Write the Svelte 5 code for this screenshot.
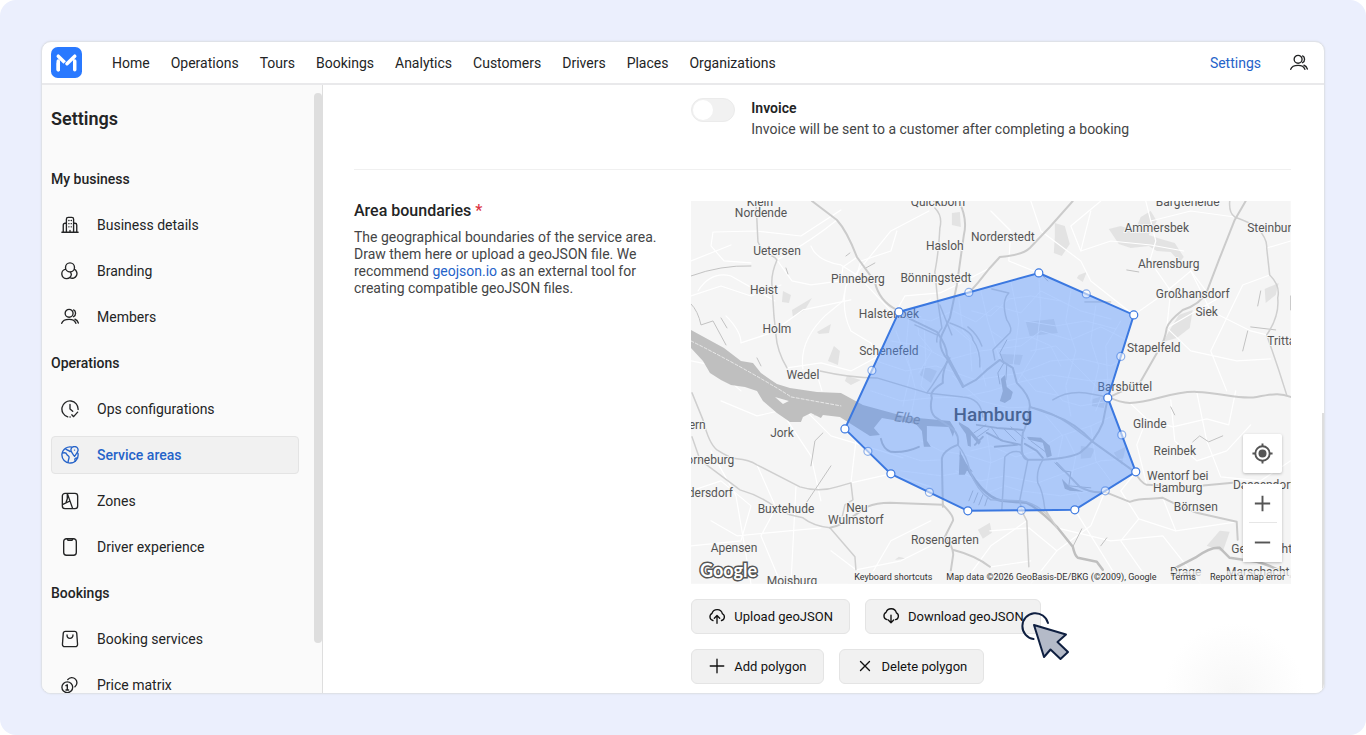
<script>
  const navItems = [
    'Home', 'Operations', 'Tours', 'Bookings', 'Analytics',
    'Customers', 'Drivers', 'Places', 'Organizations'
  ]

  const sections = [
    {
      title: 'My business',
      items: [
        { label: 'Business details', icon: 'building' },
        { label: 'Branding', icon: 'circles' },
        { label: 'Members', icon: 'users' }
      ]
    },
    {
      title: 'Operations',
      items: [
        { label: 'Ops configurations', icon: 'clock' },
        { label: 'Service areas', icon: 'globe' },
        { label: 'Zones', icon: 'zones' },
        { label: 'Driver experience', icon: 'phone' }
      ]
    },
    {
      title: 'Bookings',
      items: [
        { label: 'Booking services', icon: 'bag' },
        { label: 'Price matrix', icon: 'coins' }
      ]
    }
  ]

  const icons = {
    building: 'M1 18h18M6 18V3.500a2 2 0 0 1 2-2h4a2 2 0 0 1 2 2V18M2.500 18v-8a2 2 0 0 1 2-2H6M14 8h1.500a2 2 0 0 1 2 2v8M8.700 5h.2M11.300 5h.2M8.700 8.500h.2M11.300 8.500h.2M8.700 12h.2M11.300 12h.2M10 18v-2',
    circles: 'M10 1a5 5 0 1 0 0 10a5 5 0 1 0 0-10M5.300 8A5.300 5.300 0 1 0 11.500 13.500A5 5 0 0 0 10 11M14.700 8A5.300 5.300 0 1 1 10 17.500',
    users: 'M9 1.500a4.400 4.400 0 1 0 0 8.800A4.400 4.400 0 1 0 9 1.500M.8 17c1-3 4.200-4.300 8.200-4.300s6.500 1.300 7.500 4.300M14 2.200c2.900 1.300 2.900 6.200 0 7.500M15.500 12.500c2 .7 3.200 2.200 3.800 4.200',
    clock: 'M7.500 18.700A9 9 0 1 1 19 10.500M10 5v5l3 2.500M12 16.500l2 2 4.500-5M10 18.900h.2',
    globe: 'M12.500 1.300A9 9 0 1 0 18.800 8M1.300 8c2.500-.8 4.700 0 5.200 1.500s2.500 1 2.500 3-1.500 4-1 6.300M5 2.700c1 2.500 3.800 1.500 5 3.500M15 11.500c-2-2.700-4-5-4-7a4 4 0 0 1 8 0c0 2-2 4.300-4 7zM15 4.500h.1M18.500 13.500c-2-.6-3.500.2-3 2l.5 1.500',
    zones: 'M4.500 1.500h11a3 3 0 0 1 3 3v11a3 3 0 0 1-3 3h-11a3 3 0 0 1-3-3v-11a3 3 0 0 1 3-3zM7 1.500l6 17M1.500 14l8.500-4M7 1.500v6L5.500 12',
    phone: 'M6 .8h8a3 3 0 0 1 3 3v12.400a3 3 0 0 1-3 3H6a3 3 0 0 1-3-3V3.800a3 3 0 0 1 3-3zM7 .8v.7a1.200 1.200 0 0 0 1.200 1.200h3.600A1.200 1.200 0 0 0 13 1.500V.8',
    bag: 'M5 1.500h10a2.500 2.500 0 0 1 2.500 2.300l.9 12a2.500 2.500 0 0 1-2.500 2.700H4.100a2.500 2.500 0 0 1-2.500-2.700l.9-12A2.500 2.500 0 0 1 5 1.500zM6.700 5.500c0 5 6.600 5 6.600 0',
    coins: 'M7 6.500a6 6 0 1 0 0 12a6 6 0 1 0 0-12M7.500 4A5.700 5.700 0 1 1 15.500 12M5.500 10.700L7 9.800v5.700M5.500 15.500h3',
    upload: 'M5.500 15A4.300 4.300 0 0 1 4.500 7A6 6 0 0 1 16 7.500A4 4 0 0 1 15 15M10 18V10M7 12.500l3-3 3 3',
    download: 'M5.500 14A4.300 4.300 0 0 1 4.500 6A6 6 0 0 1 16 6.500A4 4 0 0 1 15 14M10 9v8.500M7 14.500l3 3 3-3',
    plus: 'M10 2.500v15M2.500 10h15',
    cross: 'M5 5l10 10M15 5L5 15'
  }

  const vertices = [
    [348, 72], [443, 114], [417, 197], [445, 271], [384, 309],
    [277, 310], [200, 273], [154, 228], [208, 111]
  ]
  const midpoints = vertices.map(([x, y], i) => {
    const [nx, ny] = vertices[(i + 1) % vertices.length]
    return [(x + nx) / 2, (y + ny) / 2]
  })

  const motorways = [
    'M121 0L146 19Q156 30 166 56L184 81Q188 100 206 109L219 118L246 131Q256 145 256 154L272 184',
    'M555 0L544 19L529 57L516 91Q510 103 492 109Q478 120 476 127Q474 140 469 147L449 182L417 197',
    'M382 0L359 26L339 47Q332 54 309 56L299 67L287 82L279 91',
    'M268 0Q277 18 273 34L266 84L259 117L251 134Q246 146 257 159Q251 172 252 182Q238 190 241 197Q238 210 244 216L259 226Q269 232 267 244Q251 250 251 259L252 306',
    'M252 304Q264 316 262 320L254 336Q264 348 262 356L259 376M262 349Q285 355 299 366',
    'M139 327Q153 324 163 315L176 306Q186 302 199 302L252 304',
    'M417 196Q430 202 439 202C462 202 480 190 506 191S549 199 566 196S590 192 600 196',
    'M257 159L272 186M339 206L362 214Q385 222 402 241L444 271Q450 282 456 284L499 286L542 282',
    'M366 262L389 286Q402 293 414 291L439 301C452 296 460 299 472 297Q490 306 506 312L546 321L547 339',
    'M272 186L285 179L296 169L309 159L322 167L326 182Q340 196 339 206Q336 225 332 232L331 242Q330 258 337 259L352 259Q380 257 389 252Q405 240 412 222L417 197'
  ]

  const roads = [
    'M65 0L67 41L72 51Q82 54 86 59Q80 73 81 84L83 115L85 134Q86 150 96 167',
    'M244 7Q252 15 249 27Q248 50 244 71L247 101L251 127Q245 135 246 141',
    'M129 170Q160 177 186 177L236 192L241 185L259 157M236 192L272 196Q290 197 292 216',
    'M539 0Q538 12 544 16Q560 22 566 26Q577 38 576 47L579 74Q590 85 587 97Q589 115 576 134Q587 165 596 194',
    'M1 192L12 219Q18 243 26 249Q40 258 46 258Q58 259 66 264L109 286Q128 292 146 286L160 282L162 299L154 304L151 317',
    'M1 236L9 259L49 289Q70 295 85 307L99 314L112 317Q122 325 139 327L164 356L165 369',
    'M259 122Q282 130 282 139Q290 150 289 166M316 119Q322 128 319 132L302 149L304 159M316 119Q310 100 318 92L301 88',
    'M362 199Q376 190 395 192L417 196M339 206Q360 210 378 223L402 241',
    'M311 309L314 256Q320 249 329 251L337 259L329 299Q330 310 336 320L338 366',
    'M352 259Q345 270 347 282Q352 290 354 308L366 327M267 244Q276 255 279 270Q286 290 300 299L329 300Q347 302 361 319',
    'M277 126Q287 134 291 145M224 124L246 134M249 104L261 134'
  ]

  const streets = [
    'M0 60Q25 50 40 44M22 31L20 45L33 60L60 62M23 31L65 30L110 35L150 9M86 59Q120 40 146 19',
    'M86 59L101 80L120 84L150 80L152 66L165 57M120 45Q126 60 150 64L166 74L200 110',
    'M0 95L30 85L60 95L90 84M7 90Q20 70 40 75L84 100M35 115Q50 130 50 142L80 132L112 109L160 99',
    'M112 168Q108 140 135 114L152 100L155 85L200 30L238 10M155 85Q150 110 160 130L180 142L188 160',
    'M166 74L170 60L200 50L206 30M206 109L214 95L249 92L266 84L299 67M200 110L230 116',
    'M96 167L130 162L160 170L188 155L200 130L208 111M0 160L20 164L50 190M125 170L131 190',
    'M30 200L66 215L110 205L140 235L190 250L212 257M90 210L120 255L130 300M20 250L45 295L60 383',
    'M0 290L30 280L60 305L50 340L0 345M66 264L85 307L70 335L90 383M105 286L100 383M20 320L46 335L130 327',
    'M165 240L160 282M160 282L200 273L240 286M140 350L165 369L210 360L250 340M175 383L200 340L240 320',
    'M300 10L320 30L318 60L348 72M340 0L350 30L390 60L400 80L443 114M400 10L390 50L420 40L460 44L493 50',
    'M390 50L380 25L410 0M443 114L470 95L500 70L516 91M455 0L465 40L459 60L480 90L476 127L540 90',
    'M476 127L500 150L546 160L580 158M460 20L500 10L544 16M579 74L552 84L520 150L536 190M600 40L576 47',
    'M500 70L520 110L560 130L576 134M439 202L456 218L482 226L516 218L538 224L545 190M456 218L446 244L456 284',
    'M480 199L484 240L506 260L536 250L560 224M506 191L516 240L530 276L570 280L600 260M445 271L430 290L448 318L485 330L546 321',
    'M414 291L400 325L366 350L340 383M366 327L420 340L472 335L510 383M384 309L430 383M336 320L300 345L272 383',
    'M299 330L338 327L366 350M300 366L340 360M448 318L430 340L460 383M472 297L485 330'
  ]

  const cityStreets = [
    'M215 115L240 120L262 110L285 121L305 105L330 112L350 90L390 110L420 118',
    'M200 140L230 145L257 159L290 150L330 145L350 130L380 139L410 126L438 140',
    'M185 160L215 170L245 165L285 179L330 172L360 160L390 158L420 165L430 160',
    'M180 190L210 200L240 197L272 196L300 190L326 182L360 174L400 180L425 178',
    'M268 98L272 130L285 145L295 185M290 90L297 120L309 159M320 80L328 120L322 167M348 74L350 110L345 150L326 182',
    'M380 90L375 120L385 150L375 185L380 215M405 105L400 140L408 165L400 200M430 120L415 145L417 180L405 210',
    'M218 115L215 150L225 190L220 215M233 120L235 160L230 185L241 197M205 130L220 170L212 205',
    'M280 250L300 245L325 256L345 250L370 235L400 225L422 215M265 270L290 280L314 275L347 282L380 270L410 260L435 258',
    'M230 240L250 250L275 254L300 262L314 256M200 250L230 260L251 259M210 270L251 275L279 270M290 295L314 285L330 290L370 295L400 290',
    'M375 235L385 255L380 280L390 300M355 215L372 235L366 262M400 225L405 260L420 280M295 225L300 260L295 290',
    'M261 125L279 140L281 170M300 130L315 140L340 136L360 145L370 165M330 172L345 190L370 195M262 175L290 200L318 207L339 206',
    'M334 120L365 125L395 120L425 128M340 150L365 145L385 165L415 195M352 175L372 200L390 205L420 200',
    'M240 98L225 110L228 134L241 150L228 172M281 110L300 115L318 98L340 95L370 100'
  ]

  const forests = [
    'M418 28l12-3 14 5 6-14 10-6 6 10-8 14 12 4 14 4 9 14-4 5-9-10-14-1-8-5-18 2-12-4z',
    'M364 22l10 3 5 18-8 12-8-3 1-16z', 'M488 114l14-5-3 18-13 10-14 4z',
    'M101 109l20-12-7 12-12 7z', 'M126 131l14-8-2 9-10 1z', 'M143 145l6 5-2 14-10-4z',
    'M261 12l8-1 1 15-9-2z', 'M92 90l8 4-2 8-7-1z', 'M529 330l10 1-7 20-16-6z',
    'M574 88l14-6-3 12-10 8z', 'M388 74l8-3-4 10-6-4z', 'M335 121l28-3 4 14-28 3z',
    'M310 153l22 1-3 10-18-2z', 'M402 198l14-4-3 13-12-2z', 'M390 245l14 3-4 9-10 1z',
    'M233 165l13 5-6 12-11-8z', 'M287 329l12-7 2 10-9 6z', 'M423 252l12-6-4 18z',
    'M208 356l8 2-12 1zM156 175l14 4-10 5-6-4z'
  ]

  const creeks = [
    'M0 75Q30 64 60 65M0 103Q7 110 10 124L22 120L35 144M30 117L36 127M95 67l2 6M175 67l9-5',
    'M124 214q5-1 6-4M155 55l4-3M66 157l4 8M120 265l4-25 8-8M110 310l30-45M436 69l12 2M560 126l25 3',
    'M570 90l-3 15M557 130l-5 20M600 95v14M394 101h26M352 75l5 5M502 241l7-6 9 6 14-6M480 206l4 8',
    'M316 139l-7 13 4 10-6 10 2 11M316 163l-1 16M364 262l8 8 8 1-2 14 22 2M410 345l6-8M382 346l9-18'
  ]

  const labels = [
    ['Klein', 69, 5], ['Nordende', 70, 16], ['Uetersen', 86, 54], ['Heist', 73, 93],
    ['Holm', 86, 132], ['Wedel', 112, 178], ['Pinneberg', 167, 82], ['Quickborn', 247, 5],
    ['Hasloh', 254, 49], ['Norderstedt', 312, 40], ['Bönningstedt', 245, 81], ['Halstenbek', 198, 117],
    ['Schenefeld', 198, 154], ['Bargteheide', 497, 5], ['Ammersbek', 466, 31], ['Steinburg', 582, 31],
    ['Ahrensburg', 478, 67], ['Großhansdorf', 502, 97], ['Siek', 516, 115], ['Stapelfeld', 463, 151],
    ['Trittau', 594, 144], ['Barsbüttel', 434, 190], ['Glinde', 459, 227], ['Reinbek', 484, 254],
    ['Wentorf bei', 487, 279], ['Hamburg', 487, 291], ['Börnsen', 505, 310], ['Dassendorf', 573, 288],
    ['Geesthacht', 571, 352], ['Drage', 495, 375], ['Marschacht', 567, 375], ['Jork', 91, 236],
    ['Horneburg', 15, 263], ['Fredersdorf', 11, 296], ['Stadern', -6, 228], ['Buxtehude', 95, 312],
    ['Neu', 166, 311], ['Wulmstorf', 165, 323], ['Rosengarten', 254, 343], ['Apensen', 43, 351],
    ['Moisburg', 101, 384]
  ]

  let active = $state('Service areas')
  let invoice = $state(false)
</script>

{#snippet icon(name)}
  <svg class="icon" viewBox="0 0 20 20" aria-hidden="true"><path d={icons[name]} /></svg>
{/snippet}

<div class="stage">
  <div class="window">
    <header>
      <a class="logo" href="#home" aria-label="Home">
        <svg viewBox="0 0 32 32">
          <rect width="32" height="32" rx="7" fill="#2979ff" />
          <path d="M7.500 23.500V17M7.500 9.500l8.500 8.300" />
          <path d="M14.500 19L24.500 9.500" stroke="#2979ff" stroke-width="5" />
          <path d="M16.500 17.300L24.500 9.500M7.500 23.500v-9M24.500 23.500v-9" />
        </svg>
      </a>
      <nav>
        {#each navItems as item}
          <a href="#{item.toLowerCase()}">{item}</a>
        {/each}
      </nav>
      <a class="current" href="#settings">Settings</a>
      <button class="account" aria-label="Account">{@render icon('users')}</button>
    </header>

    <div class="body">
      <aside>
        <h1>Settings</h1>
        {#each sections as section}
          <h2>{section.title}</h2>
          {#each section.items as item}
            <a
              class="side-item"
              class:active={active === item.label}
              href="#{item.icon}"
              onclick={() => (active = item.label)}
            >
              {@render icon(item.icon)}
              {item.label}
            </a>
          {/each}
        {/each}
        <div class="scrollbar"></div>
      </aside>

      <main>
        <section class="row invoice">
          <div></div>
          <label class="switch-row">
            <input type="checkbox" role="switch" bind:checked={invoice} />
            <span>
              <strong>Invoice</strong>
              <span class="hint">Invoice will be sent to a customer after completing a booking</span>
            </span>
          </label>
        </section>

        <section class="row">
          <div class="about">
            <h3>Area boundaries <span class="required">*</span></h3>
            <p>
              The geographical boundaries of the service area. Draw them here or upload a geoJSON
              file. We recommend <a href="#geojson">geojson.io</a> as an external tool for creating
              compatible geoJSON files.
            </p>
          </div>

          <div>
            <div class="map">
              <svg class="canvas" viewBox="0 0 600 383" role="img" aria-label="Service area map">
                <rect width="600" height="383" fill="#f5f5f5" />
                <g class="forests">
                  {#each forests as d}<path {d} />{/each}
                </g>
                <g class="streets">
                  {#each streets as d}<path {d} />{/each}
                </g>
                <g class="streets city">
                  {#each cityStreets as d}<path {d} />{/each}
                </g>
                <g class="water">
                  <path d="M0 129L33 147L50 160L62 162L70 172L80 179L86 183L99 187L126 191L150 192L172 204L216 216L259 220L264 228L262 236L258 226L236 225V240L240 246H233L231 230L225 223L191 217L183 227L189 234L179 235L149 216L132 214L130 217L120 212L112 216L110 221L99 221L86 212L72 200L66 190L54 186L40 184L30 179L19 172L12 160L0 147z" />
                  <path d="M314 174L316 186L322 191L320 198L314 202L309 200L312 190L310 178z" />
                  <path d="M268 221l10 6 12 14-2 3-8-10v12l-3-1-2-12-7-10zM268 245l4 14 10 12-6-1-2 4h-6l1-26zM336 236l14 1 9 8 2 10-5 2-4-15-14-3z" />
                  <path d="M374 288l-3-10 8 8 14 5-14-1z" />
                </g>
                <path d="M84 196l14 4-6 3z" fill="#f5f5f5" />
                <path class="ferry" d="M0 140Q30 155 60 172T100 196L150 205" />
                <g class="river">
                  <path d="M270 255Q290 296 311 300L336 302Q348 308 366 326L382 346Q384 355 387 357L406 361L412 369M481 369L506 356Q520 346 529 347Q536 354 539 357L566 361Q585 366 600 376" />
                </g>
                <g class="creeks">
                  {#each creeks as d}<path {d} />{/each}
                  <path d="M282 290l-4 10M287 292l-4 10M292 294l-4 10M297 296l-3 9M283 232l12-8M284 238l14-10M300 226l10 14M313 228l12 12M320 226l14 12M340 240l16 12" />
                  <path class="dock" d="M190 238q2 10 10 13 15 1 28-5M286 224l20 3 26 2M296 232l16 8 18 4M304 246l22-2M284 244l8-8M334 243l12 7 6 7" />
                </g>
                <g class="roads">
                  {#each roads as d}<path {d} />{/each}
                </g>
                <g class="motorways">
                  {#each motorways as d}<path {d} />{/each}
                </g>
                <g class="labels">
                  {#each labels as [name, x, y]}<text {x} {y}>{name}</text>{/each}
                  <text class="water-name" x="216" y="222" transform="rotate(8 216 222)">Elbe</text>
                  <text class="city-name" x="302" y="220">Hamburg</text>
                </g>
                <polygon class="area" points={vertices.join(' ')} />
                {#each midpoints as [cx, cy]}
                  <circle class="handle faint" {cx} {cy} r="4" />
                {/each}
                {#each vertices as [cx, cy]}
                  <circle class="handle" {cx} {cy} r="4" />
                {/each}
                <text class="google" x="9" y="376">Google</text>
              </svg>
              <div class="credits">
                <button>Keyboard shortcuts</button>
                <span>Map data ©2026 GeoBasis-DE/BKG (©2009), Google</span>
                <a href="#terms">Terms</a>
                <a href="#report">Report a map error</a>
              </div>
              <div class="controls">
                <button class="locate" aria-label="My location">
                  <svg viewBox="0 0 24 24">
                    <circle cx="12" cy="12" r="7.500" />
                    <circle cx="12" cy="12" r="3.200" class="dot" />
                    <path d="M12 1.500v3M12 19.500v3M1.500 12h3M19.500 12h3" />
                  </svg>
                </button>
                <div class="zoom">
                  <button aria-label="Zoom in"><svg viewBox="0 0 24 24"><path d="M12 4v16M4 12h16" /></svg></button>
                  <button aria-label="Zoom out"><svg viewBox="0 0 24 24"><path d="M4 12h16" /></svg></button>
                </div>
              </div>
            </div>

            <div class="actions">
              <button>{@render icon('upload')}Upload geoJSON</button>
              <button>
                {@render icon('download')}Download geoJSON
                <svg class="cursor" viewBox="0 0 50 50" aria-hidden="true">
                  <path class="ring" d="M13.500 28A13 13 0 1 1 28 12" />
                  <path d="M14 14L46 23.500L37.500 31L48 41L40.500 48L30.500 38.500L24 46z" />
                </svg>
              </button>
            </div>
            <div class="actions">
              <button>{@render icon('plus')}Add polygon</button>
              <button>{@render icon('cross')}Delete polygon</button>
            </div>
          </div>
        </section>
        <div class="page-scrollbar"></div>
      </main>
    </div>
  </div>
</div>

<style>
  :global(body) {
    background: #fff;
  }

  .stage {
    box-sizing: border-box;
    height: 100vh;
    padding: 41px;
    background: #ebeffd;
    border-radius: 16px;
    font-family: Roboto, "Noto Sans", sans-serif;
    font-size: 14px;
    color: #232425;
  }

  .window {
    box-sizing: border-box;
    display: flex;
    flex-direction: column;
    height: 100%;
    background: #fff;
    border: 1px solid #dfe2e8;
    border-radius: 10px;
    box-shadow: 0 0 2px #d8dce6;
    overflow: hidden;
  }

  a {
    color: inherit;
    text-decoration: none;
  }

  button {
    font: inherit;
    color: inherit;
    border: none;
    cursor: pointer;
  }

  .icon {
    width: 18px;
    height: 18px;
    flex: none;
    fill: none;
    stroke: currentColor;
    stroke-width: 1.5;
    stroke-linecap: round;
    stroke-linejoin: round;
  }

  header {
    display: flex;
    align-items: center;
    flex: none;
    height: 41px;
    padding: 0 16px 0 9px;
    border-bottom: 2px solid #e9e9eb;
  }

  .logo {
    width: 31px;
    height: 31px;
    margin-right: 30px;
  }

  .logo svg {
    display: block;
    fill: none;
    stroke: #fff;
    stroke-width: 3.6;
    stroke-linecap: round;
    stroke-linejoin: round;
  }

  .logo rect {
    stroke: none;
  }

  nav {
    display: flex;
    gap: 21px;
    flex: 1;
  }

  .current {
    color: #2563c9;
    margin-right: 29px;
  }

  .account {
    display: flex;
    padding: 0;
    background: none;
  }

  .body {
    display: flex;
    flex: 1;
    min-height: 0;
  }

  aside {
    position: relative;
    box-sizing: border-box;
    flex: 0 0 281px;
    padding: 14px 23px 0 9px;
    background: #fafafa;
    border-right: 1px solid #dedede;
    overflow: hidden;
  }

  h1 {
    margin: 0 0 21px;
    font-size: 18px;
    font-weight: 600;
    line-height: 40px;
  }

  h2 {
    margin: 0 0 8px;
    font-size: 14px;
    font-weight: 500;
    line-height: 38px;
  }

  .side-item {
    box-sizing: border-box;
    display: flex;
    align-items: center;
    gap: 18px;
    height: 38px;
    margin-bottom: 8px;
    padding: 0 9px;
    border: 1px solid transparent;
    border-radius: 4px;
  }

  .side-item.active {
    background: #f1f1f1;
    border-color: #e4e4e4;
    color: #2563c9;
    font-weight: 500;
  }

  .scrollbar {
    position: absolute;
    top: 8px;
    right: 0;
    bottom: 50px;
    width: 8px;
    background: #dedede;
    border-radius: 4px;
  }

  main {
    position: relative;
    flex: 1;
    min-width: 0;
    padding: 13px 33px 0 31px;
    background: radial-gradient(circle at 91% 100%, #f7f7f7, #fff 70px);
    overflow: hidden;
  }

  .page-scrollbar {
    position: absolute;
    right: 0;
    bottom: 0;
    width: 2px;
    height: 46%;
    background: #dedede;
  }

  .row {
    display: grid;
    grid-template-columns: minmax(0, 9fr) minmax(0, 16fr);
  }

  .invoice {
    margin-bottom: 31px;
    padding-bottom: 29px;
    border-bottom: 1px solid #f0f0f0;
  }

  .switch-row {
    display: flex;
    gap: 16px;
    cursor: pointer;
  }

  .switch-row input {
    appearance: none;
    box-sizing: border-box;
    width: 44px;
    height: 24px;
    margin: 0;
    padding: 1px;
    background: #f1f1f1;
    border: 1px solid #ebebeb;
    border-radius: 12px;
  }

  .switch-row input::before {
    content: '';
    display: block;
    width: 20px;
    height: 20px;
    background: #fff;
    border-radius: 50%;
  }

  .switch-row input:checked {
    background: #2979ff;
  }

  .switch-row input:checked::before {
    margin-left: 20px;
  }

  .switch-row strong,
  .hint {
    display: block;
    line-height: 21px;
  }

  .switch-row strong {
    font-weight: 600;
  }

  .hint,
  .about p {
    color: #444546;
  }

  .about {
    padding-right: 30px;
  }

  h3 {
    margin: 0 0 8px;
    font-size: 16px;
    font-weight: 500;
    line-height: 20px;
  }

  .required {
    color: #dc3545;
  }

  .about p {
    margin: 0;
    line-height: 17px;
  }

  .about a {
    color: #2563c9;
  }

  .map {
    position: relative;
    margin-bottom: 15px;
    overflow: hidden;
  }

  .canvas {
    display: block;
    width: 100%;
  }

  .canvas path {
    stroke-linecap: round;
    stroke-linejoin: round;
  }

  .forests path {
    fill: #e3e3e3;
  }

  .streets path {
    fill: none;
    stroke: #fff;
    stroke-width: 1.2;
  }

  .streets.city path {
    stroke-width: 0.8;
  }

  .water path {
    fill: #bfbfbf;
  }

  .ferry {
    fill: none;
    stroke: #e8e8e8;
    stroke-dasharray: 3 2;
  }

  .river path {
    fill: none;
    stroke: #bfbfbf;
    stroke-width: 2.5;
  }

  .creeks path {
    fill: none;
    stroke: #c2c2c2;
    stroke-width: 1;
  }

  .creeks .dock {
    stroke-width: 2;
  }

  .roads path {
    fill: none;
    stroke: #cfcfcf;
    stroke-width: 1.5;
  }

  .motorways path {
    fill: none;
    stroke: #cbcbcb;
    stroke-width: 2;
  }

  .labels text {
    font-size: 12px;
    text-anchor: middle;
    fill: #555;
    stroke: #f5f5f5;
    stroke-width: 2px;
    paint-order: stroke;
  }

  .labels .water-name {
    font-size: 14px;
    font-style: italic;
    fill: #8b8b8b;
    stroke: none;
  }

  .labels .city-name {
    font-size: 19px;
    font-weight: 500;
    fill: #484848;
    stroke: none;
  }

  .area {
    fill: #4b8cff;
    fill-opacity: 0.42;
    stroke: #3b78e0;
    stroke-width: 2;
  }

  .handle {
    fill: #fff;
    stroke: #3b78e0;
    stroke-width: 1.2;
  }

  .handle.faint {
    opacity: 0.55;
  }

  .google {
    font-family: Lato, sans-serif;
    font-size: 18px;
    font-weight: 700;
    fill: #fff;
    stroke: #555;
    stroke-width: 3px;
    paint-order: stroke;
  }

  .credits {
    position: absolute;
    right: 0;
    bottom: 0;
    display: flex;
    gap: 14px;
    padding: 0 6px;
    background: rgba(245, 245, 245, 0.7);
    font-size: 9px;
    line-height: 13px;
    color: #333;
  }

  .credits button {
    padding: 0;
    background: none;
  }

  .controls {
    position: absolute;
    right: 9px;
    bottom: 22px;
    display: flex;
    flex-direction: column;
    gap: 11px;
    width: 39px;
  }

  .controls button {
    display: flex;
    align-items: center;
    justify-content: center;
    width: 39px;
    height: 39px;
    padding: 0;
    background: #fff;
  }

  .controls svg {
    width: 23px;
    height: 23px;
    fill: none;
    stroke: #555;
    stroke-width: 2;
  }

  .controls .dot {
    fill: #555;
  }

  .locate,
  .zoom {
    border-radius: 2px;
    box-shadow: 0 1px 3px rgba(0, 0, 0, 0.25);
  }

  .zoom button + button::before {
    content: '';
    position: absolute;
    width: 28px;
    height: 1px;
    margin-bottom: 39px;
    background: #e6e6e6;
  }

  .actions {
    display: flex;
    gap: 15px;
    margin-bottom: 15px;
  }

  .actions button {
    position: relative;
    display: flex;
    align-items: center;
    gap: 8px;
    height: 35px;
    padding: 0 16px;
    background: #f1f1f1;
    border: 1px solid #e4e4e4;
    border-radius: 6px;
    font-size: 13px;
    color: #111;
  }

  .actions .cursor {
    position: absolute;
    top: 11px;
    right: -30px;
    width: 50px;
    height: 50px;
    fill: #b4bac8;
    stroke: #0f1f40;
    stroke-width: 2;
    stroke-linecap: round;
    stroke-linejoin: round;
  }

  .cursor .ring {
    fill: none;
  }
</style>
